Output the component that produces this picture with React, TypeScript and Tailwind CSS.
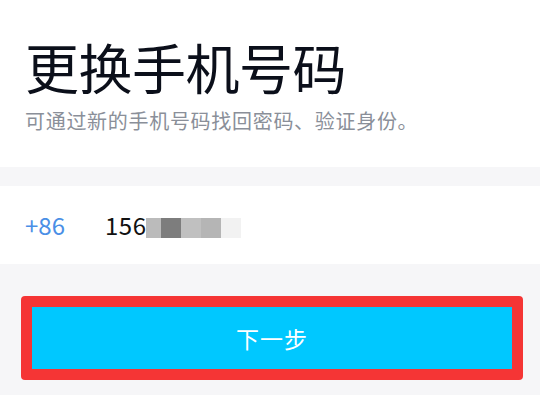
export default function App() {
  const font = { fontFamily: '"Noto Sans CJK SC", "Noto Sans", sans-serif' };
  return (
    <div className="w-[540px] h-[395px] bg-[#f6f6f8] flex flex-col overflow-hidden" style={font}>
      {/* header */}
      <div className="bg-white h-[167px] flex flex-col px-[25px] pt-[30px]">
        <h1 className="text-[54px] leading-[74px] text-[#0b0f1a] font-normal tracking-[-0.5px]">更换手机号码</h1>
        <p className="text-[20px] leading-[28px] text-[#8a8f99] mt-[3px] tracking-[0.7px]">可通过新的手机号码找回密码、验证身份。</p>
      </div>

      <div className="h-[19px]" />

      {/* phone row */}
      <div className="bg-white h-[78px] flex items-center px-[25px]">
        <span className="text-[24px] text-[#4a8fe6] w-[80px]">+86</span>
        <span className="text-[24px] text-[#111] tracking-[0.5px]">156</span>
        <div className="flex h-[20px] mt-[6px]">
          <div className="w-[15px] bg-[#bbbbbb]" />
          <div className="w-[20px] bg-[#7d7d7d]" />
          <div className="w-[20px] bg-[#c0c0c0]" />
          <div className="w-[20px] bg-[#b5b5b5]" />
          <div className="w-[20px] bg-[#f2f2f2]" />
        </div>
      </div>

      {/* button */}
      <div className="px-[21px] pt-[32px]">
        <button className="w-[502px] h-[84px] rounded-[4px] bg-[#f53535] p-[11px] flex">
          <span className="flex-1 bg-[#00c8ff] flex items-center justify-center text-white text-[23px] tracking-[1px]">下一步</span>
        </button>
      </div>
    </div>
  );
}
